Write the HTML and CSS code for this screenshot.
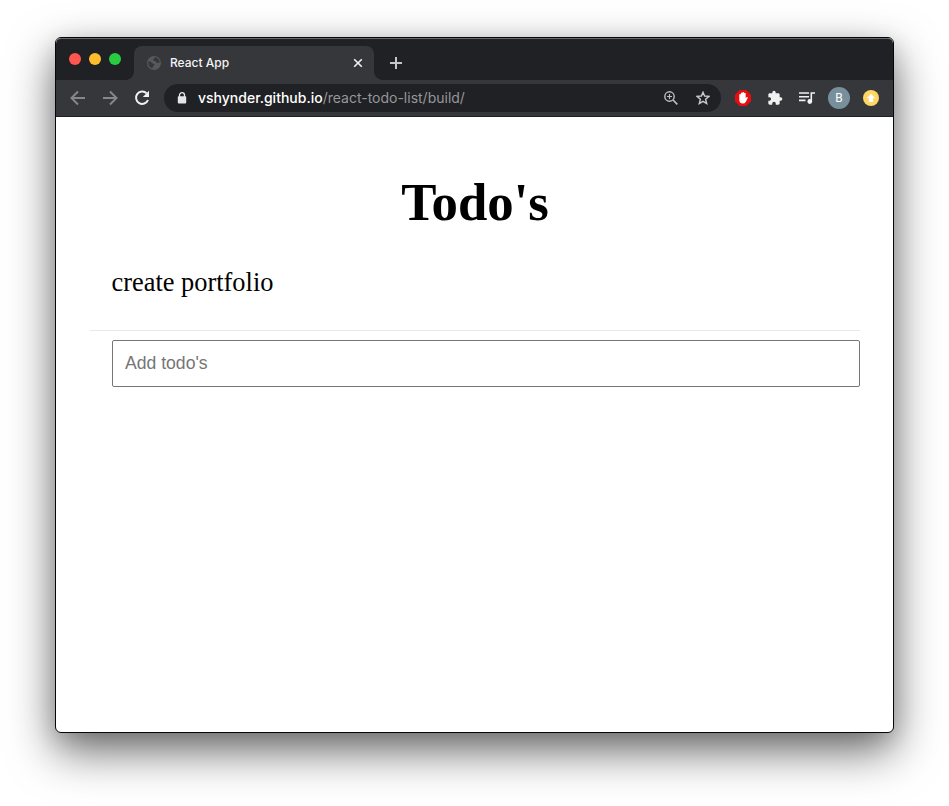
FILE: index.html
```html
<!DOCTYPE html>
<html lang="en">
<head>
<meta charset="utf-8">
<title>React App</title>
<link rel="stylesheet" href="styles.css">
</head>
<body>
<div class="window">
  <header class="tabstrip">
    <div class="lights"><i class="red"></i><i class="yellow"></i><i class="green"></i></div>
    <div class="tab">
      <svg class="globe" width="14" height="14" viewBox="0 0 14 14"><circle cx="7" cy="7" r="7" fill="#56585c"/><path d="M1.2 5.6C3.3 5.5 4.300 6 5.300 7.200 6.300 8 7.600 7.600 7.300 9 7 10.300 5.600 10 5.300 12.500 3 11.800 1 9.500 1.200 5.600ZM7.600 1.300C7.900 2.600 6 2.800 6.200 4 6.400 4.900 8 4.500 8.600 5.600 9.300 6.800 11 7.200 12.700 6.400 12.500 3.500 10.500 1.500 7.600 1.300Z" fill="#36373b"/></svg>
      <span class="tab-title">React App</span>
      <svg class="close" width="10" height="10" viewBox="0 0 10 10"><path d="M1.200 1.200 8.800 8.800M8.800 1.200 1.200 8.800" stroke="#f1f1f2" stroke-width="1.600"/></svg>
    </div>
    <svg class="plus" width="12" height="12" viewBox="0 0 12 12"><path d="M6 0V12M0 6H12" stroke="#c5c6c8" stroke-width="2"/></svg>
  </header>
  <nav class="toolbar">
    <svg class="nav-icon" width="16" height="16" viewBox="0 0 16 16"><path d="M15 8H2M8 1.500 1.500 8 8 14.500" fill="none" stroke="#86878a" stroke-width="2"/></svg>
    <svg class="nav-icon" width="16" height="16" viewBox="0 0 16 16"><path d="M1 8H14M8 1.500 14.500 8 8 14.500" fill="none" stroke="#86878a" stroke-width="2"/></svg>
    <svg class="nav-icon" width="16" height="16" viewBox="0 0 16 16"><path d="M12.700 3.400A6.200 6.200 0 1 0 14 10" fill="none" stroke="#f1f1f2" stroke-width="2"/><path d="M15 .8V7H8.800Z" fill="#f1f1f2"/></svg>
    <div class="address">
      <svg width="10" height="12" viewBox="0 0 10 12"><path d="M2.500 5V3.200a2.500 2.500 0 0 1 5 0V5" fill="none" stroke="#e4e5e7" stroke-width="1.300"/><rect x=".8" y="4.200" width="8.400" height="7.300" rx=".9" fill="#e4e5e7"/></svg>
      <span class="url"><b>vshynder.github.io</b>/react-todo-list/build/</span>
      <svg class="zoom" width="14" height="14" viewBox="0 0 14 14"><g fill="none" stroke="#bcbdbf"><circle cx="5.500" cy="5.500" r="4.700" stroke-width="1.400"/><path d="M9 9 13.300 13.300" stroke-width="1.700"/><path d="M5.500 3V8M3 5.500H8" stroke-width="1.200"/></g></svg>
      <svg class="star" width="14" height="14" viewBox="0 0 14 14"><path d="M7 1.200 8.600 5 13 5.400 9.600 8.200 10.700 12.500 7 10.300 3.300 12.500 4.400 8.200 1 5.400 5.400 5Z" fill="none" stroke="#c8c9cb" stroke-width="1.400"/></svg>
    </div>
    <div class="extensions">
      <svg width="16" height="16" viewBox="0 0 16 16"><path d="M4.700 0H11.300L16 4.700V11.300L11.300 16H4.700L0 11.300V4.700Z" fill="#e80c10"/><path d="M4.300 8V4.500q.8-.9 1.600 0V2.900q.8-.9 1.600 0V2.400q.8-.9 1.600 0V3.200q.8-.8 1.600 0V8.300l.8-1.100q1-.6 1.400.3L10.900 11.700Q9.800 13.700 7.700 13.600 4.300 13.400 4.300 10Z" fill="#fff"/></svg>
      <svg width="16" height="16" viewBox="0 0 24 24"><path d="M20.500 11H19V7c0-1.100-.9-2-2-2h-4V3.500a2.500 2.500 0 0 0-5 0V5H4c-1.100 0-2 .9-2 2v3.800h1.500a2.700 2.700 0 0 1 0 5.400H2V20c0 1.100.9 2 2 2h3.800v-1.500a2.700 2.700 0 0 1 5.400 0V22H17c1.100 0 2-.9 2-2v-4h1.500a2.500 2.500 0 0 0 0-5Z" fill="#f1f1f2"/></svg>
      <svg width="16" height="16" viewBox="0 0 16 16"><path d="M0 3H10M0 6.700H10M0 10.400H6.500M12.300 11V3H16" fill="none" stroke="#f1f1f2" stroke-width="1.600"/><circle cx="10.800" cy="11.500" r="2.400" fill="#f1f1f2"/></svg>
      <span class="avatar">B</span>
      <svg width="16" height="16" viewBox="0 0 16 16"><circle cx="8" cy="8" r="8" fill="#fdd663"/><path d="M8 3.700 12.200 8.300H10.100V12H5.900V8.300H3.800Z" fill="#fff"/></svg>
    </div>
  </nav>
  <main class="page">
    <h1>Todo's</h1>
    <ul class="todos"><li>create portfolio</li></ul>
    <form class="add"><input type="text" placeholder="Add todo's" aria-label="Add todo's"></form>
  </main>
</div>
</body>
</html>
```

FILE: styles.css
```css
* { box-sizing: border-box; }
body {
  margin: 0;
  height: 806px;
  padding: 37px 55px 73px;
  background: #fff;
  overflow: hidden;
}
svg { display: block; flex: none; }
.window {
  width: 839px;
  height: 696px;
  border: 1px solid #050607;
  border-radius: 6px;
  background: #fff;
  overflow: hidden;
  box-shadow: 0 18px 46px rgba(0, 0, 0, .58), 0 6px 22px rgba(0, 0, 0, .12);
}
.tabstrip {
  display: flex;
  height: 42px;
  background: #202124;
  border-top: 1px solid #696a6d;
  border-radius: 5px 5px 0 0;
}
.lights { display: flex; gap: 8px; padding: 14px 0 0 13px; width: 78px; }
.lights i { width: 12px; height: 12px; border-radius: 50%; }
.red { background: #ff5650; }
.yellow { background: #ffbd2e; }
.green { background: #29cc41; }
.tab {
  position: relative;
  display: flex;
  align-items: center;
  width: 240px;
  height: 34px;
  margin-top: 7px;
  padding: 0 11px 0 13px;
  border-radius: 8px 8px 0 0;
  background: #36373b;
}
.tab::before, .tab::after {
  content: "";
  position: absolute;
  bottom: 0;
  width: 8px;
  height: 8px;
}
.tab::before { left: -8px; background: radial-gradient(circle at 0 0, transparent 7.5px, #36373b 8px); }
.tab::after { right: -8px; background: radial-gradient(circle at 100% 0, transparent 7.5px, #36373b 8px); }
.tab-title {
  margin-left: 9px;
  font: 500 12px/16px Inter, sans-serif;
  color: #f4f4f5;
}
.close { margin-left: auto; }
.plus { margin: 18px 0 0 16px; }
.toolbar {
  display: flex;
  align-items: center;
  height: 37px;
  padding-left: 14px;
  background: #36373b;
  border-bottom: 1px solid #1f2023;
}
.nav-icon { margin-right: 16px; }
.address {
  display: flex;
  align-items: center;
  width: 557px;
  height: 28px;
  margin-left: -2px;
  padding: 0 11px 0 13px;
  border-radius: 14px;
  background: #202124;
}
.url {
  margin-left: 11px;
  font: 400 14px/20px Inter, sans-serif;
  color: #96979a;
  white-space: nowrap;
}
.url b { font-weight: 500; color: #fff; }
.zoom { margin-left: auto; }
.star { margin-left: 18px; }
.extensions { display: flex; align-items: center; gap: 16px; margin-left: 14px; }
.avatar {
  width: 22px;
  height: 22px;
  margin: 0 -3px;
  border-radius: 50%;
  background: #78909c;
  color: #fff;
  font: 400 12px/22px Roboto, sans-serif;
  text-align: center;
}
.page { padding: 53px 33px 0 34px; font-family: "Liberation Serif", serif; color: #000; }
h1 { margin: 0; font-size: 52.8px; line-height: 64px; text-align: center; }
.todos {
  list-style: none;
  margin: 23px 0 0;
  padding: 0 0 0 21.5px;
  height: 74px;
  border-bottom: 1px solid #e8e8e8;
  font-size: 26.4px;
  line-height: 50px;
}
.add { margin: 9px 0 0 22px; }
.add input {
  display: block;
  width: 100%;
  height: 47px;
  padding: 0 12px;
  border: 1px solid #767676;
  border-radius: 2px;
  background: #fff;
  font: 17.6px "Liberation Sans", sans-serif;
}
.add input::placeholder { color: #757575; }
```
